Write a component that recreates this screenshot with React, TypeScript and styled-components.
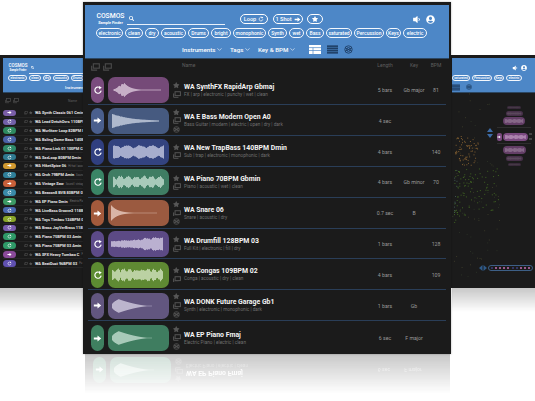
import React from "react";
import styled, {createGlobalStyle} from "styled-components";
import {FaSearch, FaStar, FaUserCircle, FaVolumeDown} from "react-icons/fa";
import {ChevronDown} from "lucide-react";

const GlobalStyle = createGlobalStyle`
  html, body {
    margin: 0;
    padding: 0;
    background: #fff;
    font-family: Roboto, "Liberation Sans", sans-serif;
  }
`

const Stage = styled.div`
  position: relative;
  width: 535px;
  height: 401px;
  overflow: hidden;
  background: #fff;
`
const CenterWindow = styled.div`
  position: absolute;
  left: 83px;
  top: 2px;
  width: 368px;
  height: 352px;
  background: #1b1b1b;
  display: flex;
  flex-direction: column;
  z-index: 3;
  box-shadow: 0 0 2px rgba(0, 0, 0, .3);
`
const SideWindow = styled.div<{ $side: "left" | "right" }>`
  position: absolute;
  top: 55px;
  height: 233px;
  ${p => p.$side === "left" ? "left: 0; width: 140px;" : "left: 451px; width: 85px;"}
  background: #1b1b1b;
  overflow: hidden;
  display: flex;
  flex-direction: column;
  z-index: 2;
`
const Header = styled.header`
  margin: 3px 2px 0;
  height: 54px;
  flex: none;
  background: #4d87c7;
  border-bottom: 1px solid #2c4763;
  display: flex;
  flex-direction: column;
  box-sizing: border-box;
  padding-top: 8px;
  color: #fff;
`
const SideHeader = styled(Header)<{ $ml: number }>`
  margin: 3px 0 0 ${p => p.$ml}px;
  height: 35px;
  padding-top: 4px;
`
const TopRow = styled.div<{ $pl?: number }>`
  display: flex;
  align-items: center;
  height: 12px;
  padding-left: ${p => p.$pl ?? 10}px;
`
const Logo = styled.div<{ $w: number }>`
  width: ${p => p.$w}px;
  flex: none;
  display: flex;
  flex-direction: column;
  align-items: center;
  line-height: 1;
`
const LogoName = styled.span<{ $small?: boolean }>`
  font-size: ${p => p.$small ? "4.6px" : "6.8px"};
  font-weight: 500;
`
const LogoSub = styled.span<{ $small?: boolean }>`
  font-size: ${p => p.$small ? "2.6px" : "3.8px"};
  font-weight: 700;
  margin-top: 1px;
`
const SearchBox = styled.div<{ $w: number }>`
  width: ${p => p.$w}px;
  height: 11px;
  flex: none;
  margin-left: 1px;
  padding-left: 2px;
  box-sizing: border-box;
  border-bottom: 1px solid #e8f0fa;
  display: flex;
  align-items: center;
`
const Toggle = styled.div<{ $w: number; $ml: number }>`
  width: ${p => p.$w}px;
  margin-left: ${p => p.$ml}px;
  height: 10px;
  flex: none;
  box-sizing: border-box;
  border: 1px solid #fff;
  border-radius: 6px;
  font-size: 5.6px;
  font-weight: 500;
  display: flex;
  align-items: center;
  justify-content: center;
  gap: 2px;
`
const TopIcons = styled.div<{ $small?: boolean }>`
  margin-left: auto;
  padding-right: ${p => p.$small ? 9 : 14}px;
  display: flex;
  align-items: center;
  gap: ${p => p.$small ? 3 : 5}px;
  font-size: ${p => p.$small ? 6 : 9}px;
`
const ChipRow = styled.div<{ $pl: number; $mt: number }>`
  display: flex;
  gap: 2px;
  padding-left: ${p => p.$pl}px;
  margin-top: ${p => p.$mt}px;
  white-space: nowrap;
`
const Chip = styled.span<{ $w: number; $small?: boolean }>`
  width: ${p => p.$w}px;
  height: ${p => p.$small ? 6 : 10}px;
  flex: none;
  box-sizing: border-box;
  border: ${p => p.$small ? ".7px" : "1px"} solid #f4f8fd;
  border-radius: 6px;
  font-size: ${p => p.$small ? 3.2 : 5}px;
  font-weight: 500;
  display: flex;
  align-items: center;
  justify-content: center;
  overflow: hidden;
`
const FilterRow = styled.div<{ $pl: number; $small?: boolean }>`
  display: flex;
  align-items: center;
  padding-left: ${p => p.$pl}px;
  margin-top: ${p => p.$small ? 2 : 6}px;
  height: ${p => p.$small ? 8 : 11}px;
  white-space: nowrap;
`
const Filter = styled.span<{ $w: number; $small?: boolean }>`
  width: ${p => p.$w}px;
  flex: none;
  font-size: ${p => p.$small ? 4 : 6.2}px;
  font-weight: 500;
  display: flex;
  align-items: center;
  gap: 1px;
`
const ViewIcon = styled.svg<{ $w: number }>`
  width: ${p => p.$w}px;
  height: 9px;
  margin-right: 6px;
  flex: none;
`
const ListHead = styled.div`
  display: grid;
  grid-template-columns: 13px 61px 8px 1fr 26px 24px 12px;
  column-gap: 4px;
  height: 16px;
  padding: 0 9px 0 8px;
  font-size: 5px;
  color: #5f5f5f;
  text-align: center;
`
const HeadIcons = styled.div`
  grid-column: 1 / 3;
  display: flex;
  gap: 3px;
  padding-top: 4px;
  color: #4c4c4c;
`
const HeadLabel = styled.span<{ $left?: boolean }>`
  padding-top: 3px;
  ${p => p.$left ? "grid-column: 4; text-align: left; margin-left: -3px;" : ""}
`
const List = styled.div`
  padding: 0 5px;
  flex: 1;
`
const Row = styled.div<{ $last?: boolean }>`
  display: grid;
  grid-template-columns: 13px 61px 8px 1fr 26px 24px 12px;
  column-gap: 4px;
  align-items: center;
  height: ${p => p.$last ? "33px" : "30.8px"};
  box-sizing: border-box;
  padding: 1px 4px 0 3px;
  border-bottom: ${p => p.$last ? "0" : "1px solid #2a3e58"};
`
const PlayButton = styled.div<{ $color: string }>`
  width: 13px;
  height: 26px;
  border-radius: 7px;
  background: ${p => p.$color};
  color: #fff;
  display: flex;
  align-items: center;
  justify-content: center;
`
const WaveBox = styled.div<{ $color: string }>`
  height: 26px;
  border-radius: 7px;
  background: ${p => p.$color};
  overflow: hidden;
  display: flex;
`
const RowIcons = styled.div`
  display: flex;
  flex-direction: column;
  align-items: center;
  gap: 2px;
  margin-left: -1px;
  color: #565656;
  font-size: 6.5px;
`
const Titles = styled.div`
  min-width: 0;
  white-space: nowrap;
  margin-left: -1px;
`
const Title = styled.div`
  font-size: 6.9px;
  line-height: 9px;
  font-weight: 700;
  color: #f4f4f4;
`
const Tags = styled.div`
  font-size: 4.7px;
  line-height: 6px;
  color: #6f6f6f;
`
const Cell = styled.span`
  font-size: 5.2px;
  color: #9a9a9a;
  text-align: center;
  white-space: nowrap;
`
const MiniHead = styled.div`
  height: 16px;
  display: flex;
  align-items: center;
  padding-left: 5px;
  gap: 2px;
  color: #4c4c4c;
`
const MiniLabel = styled.span`
  margin-left: 47px;
  font-size: 3.4px;
  color: #5f5f5f;
`
const MiniList = styled.div`
  padding-left: 3px;
`
const MiniRow = styled.div`
  height: 8.85px;
  display: flex;
  align-items: center;
  border-bottom: 1px solid #262626;
  box-sizing: border-box;
  white-space: nowrap;
`
const MiniButton = styled.div<{ $color: string }>`
  width: 13px;
  height: 6.5px;
  flex: none;
  border-radius: 3.5px;
  background: ${p => p.$color};
  color: #fff;
  display: flex;
  align-items: center;
  justify-content: center;
`
const MiniIcons = styled.div`
  width: 19px;
  flex: none;
  padding-left: 8px;
  box-sizing: border-box;
  display: flex;
  gap: 1px;
  align-items: center;
  color: #555;
  font-size: 3.5px;
`
const MiniTitle = styled.span`
  font-size: 3.9px;
  font-weight: 700;
  color: #e8e8e8;
`
const MiniTag = styled.span`
  font-size: 2.8px;
  color: #777;
  margin-left: 2px;
`
const Plot = styled.svg`
  position: absolute;
  left: 0;
  top: 0;
  width: 85px;
  height: 233px;
`
const PillStack = styled.div`
  position: absolute;
  left: 44px;
  top: 51px;
  width: 38px;
  display: flex;
  flex-direction: column;
  align-items: center;
`
const StackPill = styled.div<{ $w: number; $h: number; $o: number; $mt: number }>`
  width: ${p => p.$w}px;
  height: ${p => p.$h}px;
  margin-top: ${p => p.$mt}px;
  opacity: ${p => p.$o};
  border-radius: 4px;
  background: #7b4a80;
  overflow: hidden;
  display: flex;
  flex: none;
`
const StackRule = styled.div`
  width: 34px;
  height: 1px;
  flex: none;
  background: #2e2e2e;
  margin-top: 2px;
`
const StackCenter = styled.div`
  display: flex;
  align-items: center;
  gap: 1px;
  margin-top: 4px;
  height: 9px;
`
const StackKnob = styled.div`
  width: 5px;
  height: 8px;
  border-radius: 2px;
  background: #7b4a80;
  color: #fff;
  display: flex;
  align-items: center;
  justify-content: center;
`
const StackSide = styled.div`
  width: 3px;
  height: 7px;
  border-top: 2px solid #444;
  border-bottom: 2px solid #444;
  box-sizing: border-box;
`
const StepArrows = styled.svg`
  position: absolute;
  left: 36px;
  top: 72px;
  width: 6px;
  height: 12px;
`
const SliderArrows = styled.svg`
  position: absolute;
  left: 28px;
  top: 210px;
  width: 8px;
  height: 6px;
`
const Slider = styled.div`
  position: absolute;
  left: 37px;
  top: 210px;
  width: 45px;
  height: 6px;
  box-sizing: border-box;
  border: 1px solid #3d5f86;
  border-radius: 3px;
  display: flex;
  align-items: center;
  justify-content: space-around;
  padding: 0 1px;
`
const SliderDot = styled.i<{ $on: boolean }>`
  width: 2px;
  height: 2px;
  border-radius: 1px;
  background: ${p => p.$on ? "#c76fb5" : "#3b3f80"};
`
const Reflection = styled.div<{ $left: number; $top: number; $w: number; $h: number }>`
  position: absolute;
  left: ${p => p.$left}px;
  top: ${p => p.$top}px;
  width: ${p => p.$w}px;
  height: ${p => p.$h}px;
  overflow: hidden;
  background: #1b1b1b;
  opacity: .24;
  -webkit-mask-image: linear-gradient(to bottom, #000, transparent);
  mask-image: linear-gradient(to bottom, #000, transparent);
  z-index: 1;
`
const Flipped = styled.div`
  transform: scaleY(-1);
  padding: 0 5px;
`

type WaveKind = "swell" | "decay" | "lobes" | "bursts" | "hit" | "grow" | "noise" | "drop"

const noise = (i: number) => {
    const v = Math.sin(i * 12.9898) * 43758.5453
    return v - Math.floor(v)
}

const envelope = (kind: WaveKind, t: number, i: number) => {
    switch (kind) {
        case "swell":
            if (t < .07 || t > .88) return 0
            if (t < .26) return .86 * (t - .07) / .19 * (.7 + .3 * noise(i))
            return Math.max(.05, .86 * Math.exp(-(t - .26) * 10))
        case "decay":
            if (t < .06 || t > .84) return 0
            return .88 * Math.exp(-(t - .06) * 3.2) * (.92 + .08 * noise(i))
        case "lobes":
            if (t < .08 || t > .92) return 0
            return (.48 + .34 * Math.abs(Math.sin(t * 15))) * (.85 + .15 * noise(i))
        case "bursts":
            if (t < .07 || t > .92) return 0
            return (.34 + .44 * Math.abs(Math.sin(t * 24))) * (.7 + .3 * noise(i))
        case "hit":
            if (t < .05 || t > .8) return 0
            return Math.max(.03, .88 * Math.exp(-(t - .05) * 9))
        case "grow":
            if (t < .05 || t > .9) return 0
            return (.36 + .3 * Math.abs(Math.sin(t * 18)) * t + .5 * t * t) * (.75 + .25 * noise(i))
        case "noise":
            if (t < .06 || t > .9) return 0
            return (.44 + .36 * Math.abs(Math.sin(t * 31))) * (.65 + .35 * noise(i))
        case "drop":
            if (t < .05 || t > .72) return 0
            if (t < .17) return .8 * Math.sqrt((t - .05) / .12)
            return Math.max(.03, .8 * Math.pow(1 - (t - .17) / .55, 1.7))
    }
}

const Wave = ({kind, tint = "#fff"}: { kind: WaveKind, tint?: string }) => {
    const bars = Array.from({length: 61}, (_, i) => envelope(kind, i / 60, i))
    return (
        <svg viewBox="0 0 61 26" width="100%" height="100%" preserveAspectRatio="none">
            {bars.map((a, i) => a > 0 && (
                <rect key={i} x={i} y={13 - a * 8.5} width={.9} height={a * 17} fill={tint} opacity={.72}/>
            ))}
        </svg>
    )
}

const LoopIcon = ({size}: { size: number }) => (
    <svg viewBox="0 0 16 16" width={size} height={size} fill="none">
        <path d="M12.8 9.6A5 5 0 1 1 10.6 3.9" stroke="#fff" strokeWidth="1.9" strokeLinecap="round"/>
        <path d="M9.5 1.4 14 3.9 10 7Z" fill="#fff"/>
    </svg>
)

const ArrowIcon = ({size}: { size: number }) => (
    <svg viewBox="0 0 16 16" width={size} height={size}>
        <path d="M1.5 6.2H8V2.6L14.6 8 8 13.4V9.8H1.5Z" fill="#fff"/>
    </svg>
)

const FolderIcon = ({size = 8}: { size?: number }) => (
    <svg viewBox="0 0 16 14" width={size} height={size * .85} fill="none" stroke="currentColor" strokeWidth="2">
        <rect x="4" y="1.5" width="11" height="8"/>
        <path d="M1 5v8h10"/>
    </svg>
)

const GlobeIcon = ({size = 8, color = "#5a5a5a"}: { size?: number, color?: string }) => (
    <svg viewBox="0 0 16 16" width={size} height={size} fill="none" stroke={color} strokeWidth="1.6">
        <circle cx="8" cy="8" r="6.6"/>
        <circle cx="8" cy="8" r="3.4"/>
        <path d="M2 5l12 6M2 11l12-6"/>
    </svg>
)

const GridIcon = ({w}: { w: number }) => (
    <ViewIcon $w={w} viewBox="0 0 12 9">
        <rect width="12" height="9" fill="#fff"/>
        <path d="M0 2.6h12M0 5.5h12M4 2.6v6.4" stroke="#4d87c7" strokeWidth=".7"/>
    </ViewIcon>
)

const ListIcon = ({w}: { w: number }) => (
    <ViewIcon $w={w} viewBox="0 0 12 9">
        <rect width="12" height="9" fill="#1f3f66"/>
        <path d="M0 2.2h12M0 4.5h12M0 6.8h12" stroke="#4d87c7" strokeWidth=".6"/>
    </ViewIcon>
)

interface ISample {
    name: string,
    tags: string,
    mode: "loop" | "shot",
    button: string,
    wave: string,
    kind: WaveKind,
    tint: string,
    length: string,
    keyName?: string,
    bpm?: string,
    globe?: boolean
}

const samples: ISample[] = [
    {name: "WA SynthFX RapidArp Gbmaj", tags: "FX | arp | electronic | punchy | wet | clean", mode: "loop", button: "#7a4c7e", wave: "#754a78", kind: "swell", tint: "#f4e6f2", length: "5 bars", keyName: "Gb major", bpm: "81"},
    {name: "WA E Bass Modern Open A0", tags: "Bass Guitar | modern | electric | open | dry | dark", mode: "shot", button: "#4a5f8d", wave: "#465a80", kind: "decay", tint: "#e8eef8", length: "4 sec", globe: true},
    {name: "WA New TrapBass 140BPM Dmin", tags: "Sub | trap | electronic | monophonic | dark", mode: "loop", button: "#303f80", wave: "#33437f", kind: "lobes", tint: "#e4e8f8", length: "4 bars", bpm: "140"},
    {name: "WA Piano 70BPM Gbmin", tags: "Piano | acoustic | wet | clean", mode: "loop", button: "#3a8566", wave: "#3f7d63", kind: "bursts", tint: "#e2f4ea", length: "4 bars", keyName: "Gb minor", bpm: "70"},
    {name: "WA Snare 06", tags: "Snare | acoustic | dry", mode: "shot", button: "#a35a3c", wave: "#9b5a40", kind: "hit", tint: "#fbe9df", length: "0.7 sec", keyName: "B", globe: true},
    {name: "WA Drumfill 128BPM 03", tags: "Full Kit | electronic | fill | dry", mode: "loop", button: "#5c4a88", wave: "#5c4a85", kind: "grow", tint: "#eee8fa", length: "1 bars", bpm: "128"},
    {name: "WA Congas 109BPM 02", tags: "Conga | acoustic | dry | clean", mode: "loop", button: "#5d8c32", wave: "#5f8a33", kind: "noise", tint: "#eff8e0", length: "4 bars", bpm: "109"},
    {name: "WA DONK Future Garage Gb1", tags: "Synth | electronic | monophonic | dark", mode: "shot", button: "#62567f", wave: "#62567f", kind: "drop", tint: "#efeaf8", length: "1 bars", keyName: "Gb", globe: true},
    {name: "WA EP Piano Fmaj", tags: "Electric Piano | electric | clean", mode: "shot", button: "#3f8060", wave: "#3f7d60", kind: "drop", tint: "#e2f4ea", length: "6 sec", keyName: "F major", globe: true},
]

const miniSamples: [string, string, "loop" | "shot", string][] = [
    ["WA Synth Classic 061 Cmin", "", "shot", "#7a5ea8"],
    ["WA Lead DetuhOvrs 110BPM", "", "loop", "#7260a8"],
    ["WA Wurlitzer Loop 82BPM B", "", "loop", "#2e8a60"],
    ["WA Bsling Dome Bass 140BP", "", "loop", "#4a62a8"],
    ["WA Piano Link 01 100PM Cr", "", "loop", "#2e8a6a"],
    ["WA SaxLoop 80BPM Dmin", "Sax", "loop", "#2f7a90"],
    ["WA HiketSpice 06", "Hi-hat | acoustic", "shot", "#d29a30"],
    ["WA Orch 79BPM Amin", "Sound", "loop", "#2f7f99"],
    ["WA Vintage Saw", "Sound | vintage", "shot", "#c8603a"],
    ["WA Beacon8 BVB 80BPM 02", "", "loop", "#3a8aa8"],
    ["WA EP Piano Dmin", "Electric Pia", "shot", "#3d9a65"],
    ["WA LiveBass Groove2 118B", "", "loop", "#4a68b0"],
    ["WA Toys Timbau 124BPM 02", "", "loop", "#8aa62a"],
    ["WA Brass JayVerBrass 118B", "", "loop", "#7a5cb0"],
    ["WA Piano 75BPM 03 Amin", "", "loop", "#2f9a68"],
    ["WA Piano 75BPM 03 Amin", "", "loop", "#2f9a68"],
    ["WA SFX Heavy Tumbao C", "Fx", "shot", "#8a4a9a"],
    ["WA BeatDust 96BPM 03", "Fu", "loop", "#5f50b0"],
]

const mainChips: [string, number][] = [
    ["electronic", 27], ["clean", 18], ["dry", 14], ["acoustic", 25], ["Drums", 21], ["bright", 20],
    ["monophonic", 33], ["Synth", 19], ["wet", 15], ["Bass", 18], ["saturated", 26], ["Percussion", 30],
    ["Keys", 15], ["electric", 24],
]

const SampleRow = ({s, last}: { s: ISample, last?: boolean }) => (
    <Row $last={last}>
        <PlayButton $color={s.button}>
            {s.mode === "loop" ? <LoopIcon size={10}/> : <ArrowIcon size={9}/>}
        </PlayButton>
        <WaveBox $color={s.wave}><Wave kind={s.kind} tint={s.tint}/></WaveBox>
        <RowIcons>
            <FaStar/>
            <FolderIcon/>
            {s.globe && <GlobeIcon size={7}/>}
        </RowIcons>
        <Titles>
            <Title>{s.name}</Title>
            <Tags>{s.tags}</Tags>
        </Titles>
        <Cell>{s.length}</Cell>
        <Cell>{s.keyName}</Cell>
        <Cell>{s.bpm}</Cell>
    </Row>
)

const seeded = (n: number, seed: number) => Array.from({length: n}, (_, i) => noise(i * 7.13 + seed))

const ScatterDots = () => {
    const orangeA = seeded(70, 1), orangeB = seeded(70, 2)
    const greenA = seeded(110, 3), greenB = seeded(110, 4)
    const farA = seeded(70, 5), farB = seeded(70, 6)
    return (
        <Plot viewBox="0 0 85 233">
            {farA.map((a, i) => (
                <rect key={"f" + i} x={a * 50} y={38 + farB[i] * 185} width={.8} height={.8}
                      fill={i % 2 ? "#4a4930" : "#333d2c"}/>
            ))}
            {orangeA.map((a, i) => {
                const angle = a * 6.28, r = 4 + orangeB[i] * 10
                return <rect key={"o" + i} x={14 + Math.cos(angle) * r} y={95 + Math.sin(angle) * r * 1.2}
                             width={1} height={1} fill="#9a6e36" opacity={.8}/>
            })}
            {greenA.map((a, i) => (
                <rect key={"g" + i} x={3 + a * a * 44} y={113 + greenB[i] * (55 - a * 14)} width={1} height={1}
                      fill={a < .25 && i % 2 ? "#4f6d68" : "#4f7f26"} opacity={.7}/>
            ))}
        </Plot>
    )
}

const App = () => {
    return (
        <Stage>
            <GlobalStyle/>

            <SideWindow $side="left">
                <SideHeader $ml={3}>
                    <TopRow $pl={5}>
                        <Logo $w={20}>
                            <LogoName $small>COSMOS</LogoName>
                            <LogoSub $small>Sample Finder</LogoSub>
                        </Logo>
                        <SearchBox $w={70}><FaSearch size={3}/></SearchBox>
                    </TopRow>
                    <ChipRow $pl={5} $mt={1}>
                        {mainChips.slice(0, 5).map(([label], i) => (
                            <Chip key={label} $w={[19, 12, 8, 16, 13][i]} $small>{label}</Chip>
                        ))}
                    </ChipRow>
                    <FilterRow $pl={62} $small>
                        <Filter $w={30} $small>Instruments</Filter>
                    </FilterRow>
                </SideHeader>
                <MiniHead>
                    <FolderIcon size={6}/>
                    <FolderIcon size={6}/>
                    <MiniLabel>Name</MiniLabel>
                </MiniHead>
                <MiniList>
                    {miniSamples.map(([name, tag, mode, color], i) => (
                        <MiniRow key={i}>
                            <MiniButton $color={color}>
                                {mode === "loop" ? <LoopIcon size={5}/> : <ArrowIcon size={5}/>}
                            </MiniButton>
                            <MiniIcons><FolderIcon size={4}/><FaStar/></MiniIcons>
                            <MiniTitle>{name}</MiniTitle>
                            {tag && <MiniTag>{tag}</MiniTag>}
                        </MiniRow>
                    ))}
                </MiniList>
            </SideWindow>

            <SideWindow $side="right">
                <SideHeader $ml={1}>
                    <TopRow $pl={0}>
                        <TopIcons $small>
                            <FaVolumeDown/>
                            <FaUserCircle/>
                        </TopIcons>
                    </TopRow>
                    <ChipRow $pl={0} $mt={1}>
                        <Chip $w={18} $small>saturated</Chip>
                        <Chip $w={20} $small>Percussion</Chip>
                        <Chip $w={10} $small>Keys</Chip>
                        <Chip $w={16} $small>electric</Chip>
                    </ChipRow>
                    <FilterRow $pl={0} $small>
                        <ListIcon w={8}/>
                        <GlobeIcon size={6} color="#1f3f66"/>
                    </FilterRow>
                </SideHeader>
                <ScatterDots/>
                <StepArrows viewBox="0 0 6 12">
                    <path d="M3 1 6 5H0ZM3 11 0 7H6Z" fill="#3d6ca8"/>
                </StepArrows>
                <PillStack>
                    <StackPill $w={14} $h={3} $o={.3} $mt={0}><Wave kind="noise" tint="#d9b8d8"/></StackPill>
                    <StackPill $w={17} $h={5} $o={.45} $mt={2}><Wave kind="noise" tint="#d9b8d8"/></StackPill>
                    <StackPill $w={22} $h={8} $o={.75} $mt={1}><Wave kind="lobes" tint="#d9b8d8"/></StackPill>
                    <StackRule/>
                    <StackCenter>
                        <StackKnob><ArrowIcon size={4}/></StackKnob>
                        <StackPill $w={25} $h={8} $o={1} $mt={0}><Wave kind="lobes" tint="#d9b8d8"/></StackPill>
                        <StackSide/>
                    </StackCenter>
                    <StackRule/>
                    <StackPill $w={23} $h={8} $o={.75} $mt={2}><Wave kind="lobes" tint="#d9b8d8"/></StackPill>
                    <StackPill $w={17} $h={5} $o={.45} $mt={2}><Wave kind="noise" tint="#d9b8d8"/></StackPill>
                    <StackPill $w={13} $h={3} $o={.3} $mt={2}><Wave kind="noise" tint="#d9b8d8"/></StackPill>
                </PillStack>
                <SliderArrows viewBox="0 0 8 6">
                    <path d="M0 3 3.5 0V6ZM8 3 4.5 0V6Z" fill="#2f5a8a"/>
                </SliderArrows>
                <Slider>
                    {[0, 1, 1, 1, 1, 0, 0, 1, 1, 1].map((on, i) => <SliderDot key={i} $on={!!on}/>)}
                </Slider>
            </SideWindow>

            <CenterWindow>
                <Header>
                    <TopRow>
                        <Logo $w={31}>
                            <LogoName>COSMOS</LogoName>
                            <LogoSub>Sample Finder</LogoSub>
                        </Logo>
                        <SearchBox $w={98}><FaSearch size={5}/></SearchBox>
                        <Toggle $w={28} $ml={15}>Loop <LoopIcon size={6}/></Toggle>
                        <Toggle $w={30} $ml={5}>1 Shot <ArrowIcon size={7}/></Toggle>
                        <Toggle $w={16} $ml={4}><FaStar size={6}/></Toggle>
                        <TopIcons><FaVolumeDown/><FaUserCircle/></TopIcons>
                    </TopRow>
                    <ChipRow $pl={11} $mt={3}>
                        {mainChips.map(([label, w]) => <Chip key={label} $w={w}>{label}</Chip>)}
                    </ChipRow>
                    <FilterRow $pl={97}>
                        <Filter $w={48}>Instruments <ChevronDown size={7}/></Filter>
                        <Filter $w={28}>Tags <ChevronDown size={7}/></Filter>
                        <Filter $w={51}>Key &amp; BPM <ChevronDown size={7}/></Filter>
                        <GridIcon w={12}/>
                        <ListIcon w={11}/>
                        <GlobeIcon size={9} color="#1f3f66"/>
                    </FilterRow>
                </Header>
                <ListHead>
                    <HeadIcons>
                        <FolderIcon size={9}/>
                        <FolderIcon size={9}/>
                    </HeadIcons>
                    <HeadLabel $left>Name</HeadLabel>
                    <HeadLabel>Length</HeadLabel>
                    <HeadLabel>Key</HeadLabel>
                    <HeadLabel>BPM</HeadLabel>
                </ListHead>
                <List>
                    {samples.map((s, i) => <SampleRow key={s.name} s={s} last={i === samples.length - 1}/>)}
                </List>
            </CenterWindow>

            <Reflection $left={85} $top={354} $w={365} $h={40}>
                <Flipped><SampleRow s={samples[8]} last/></Flipped>
            </Reflection>
            <Reflection $left={0} $top={288} $w={84} $h={24}/>
            <Reflection $left={452} $top={288} $w={83} $h={24}/>
        </Stage>
    )
}

export default App
